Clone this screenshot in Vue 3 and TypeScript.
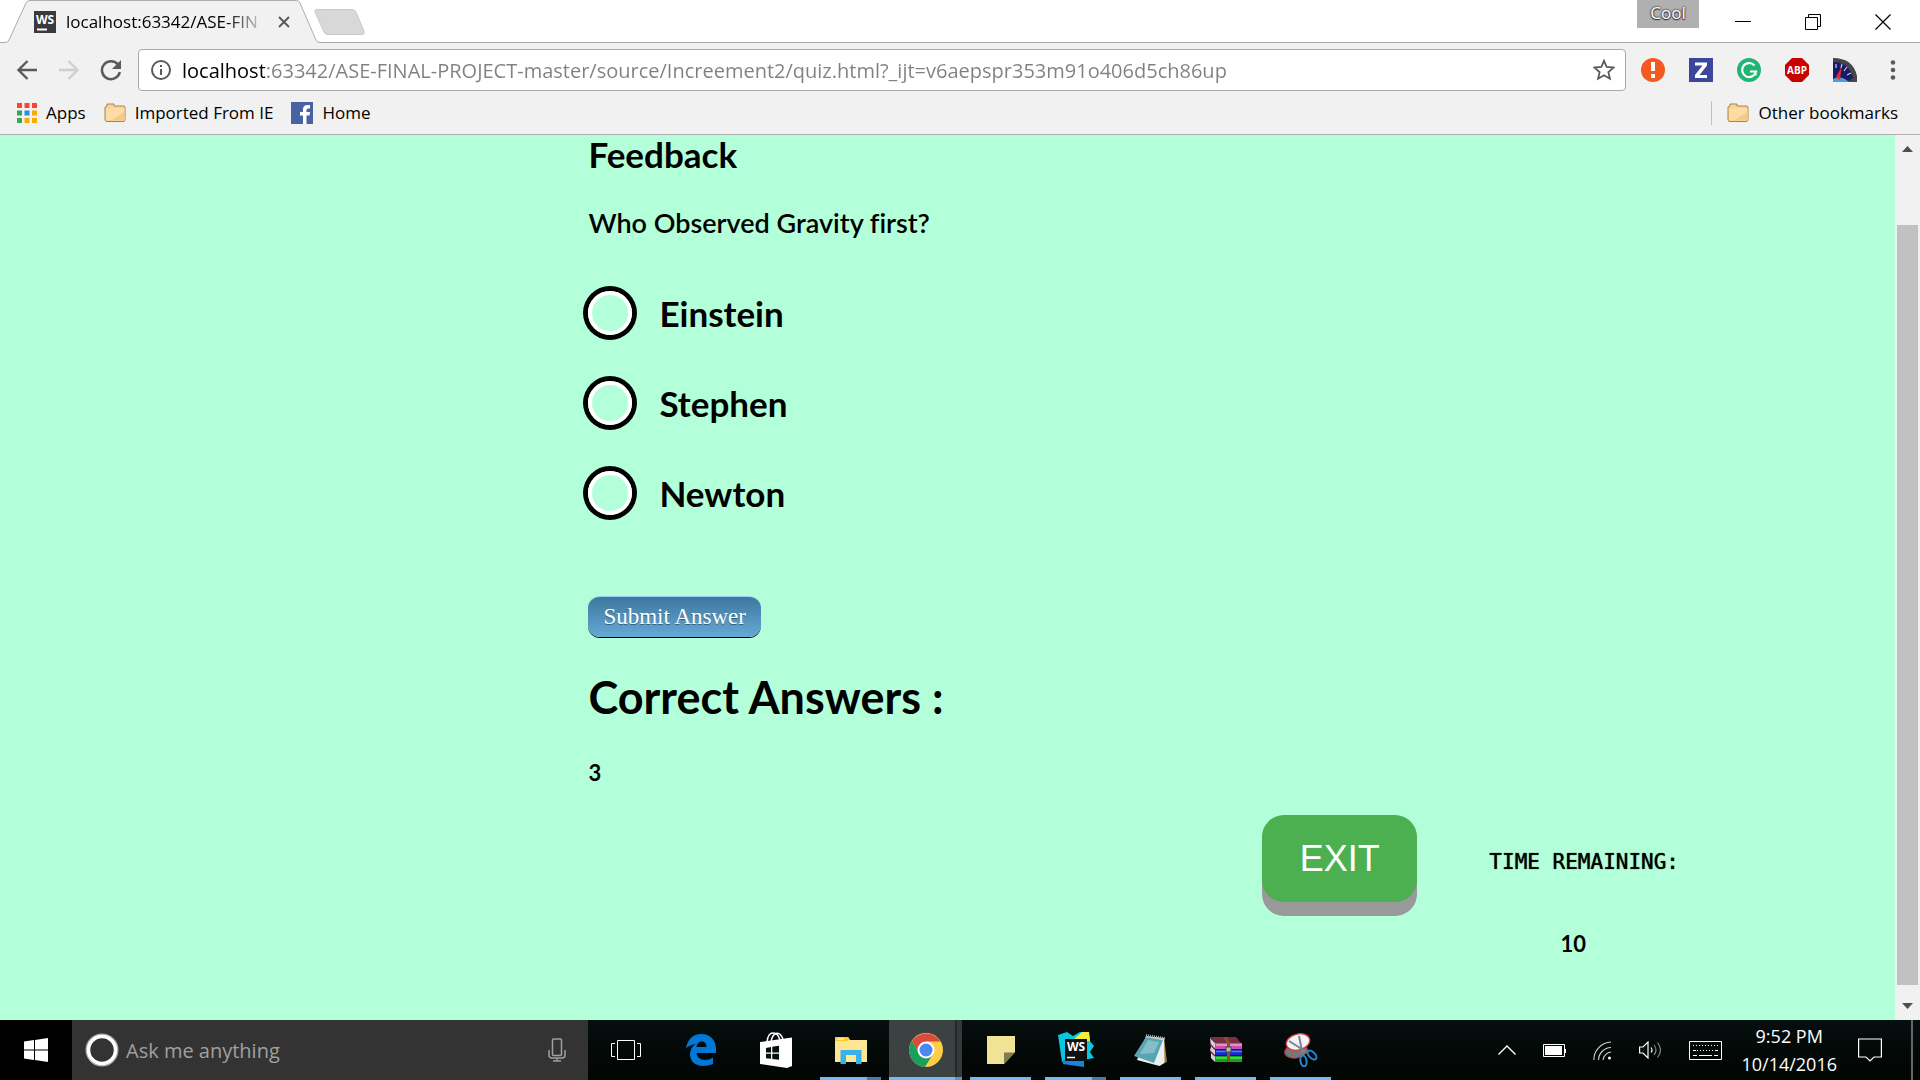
<script setup lang="ts">
import { ref } from 'vue'

const url = ref('localhost:63342/ASE-FINAL-PROJECT-master/source/Increement2/quiz.html?_ijt=v6aepspr353m91o406d5ch86up')
const options = ['Einstein', 'Stephen', 'Newton']
const picked = ref<string | null>(null)
const search = ref('')
const correct = ref(3)
const seconds = ref(10)
const appColors = ['#ff4131', '#ff4131', '#ff4131', '#34a853', '#2a8cf0', '#f9ab00', '#34a853', '#f9ab00', '#f9ab00']
</script>

<template>
  <div class="screen">
    <header class="chrome">
      <div class="tabstrip">
        <svg class="tab-shape" width="320" height="43" viewBox="0 0 320 43" aria-hidden="true">
          <path d="M0 42.5H5Q8 42.5 9 40L26 3Q27 .5 30 .5H296Q299 .5 300 3L316 40Q317 42.5 320 42.5V43H0Z" fill="#f1f1f1" />
          <path d="M0 42.5H5Q8 42.5 9 40L26 3Q27 .5 30 .5H296Q299 .5 300 3L316 40Q317 42.5 320 42.5" fill="none" stroke="#acacac" />
        </svg>
        <div class="tab">
          <svg width="22" height="22" viewBox="0 0 22 22" aria-hidden="true">
            <rect width="22" height="22" fill="#3a3a3c" />
            <text x="11" y="13" text-anchor="middle" font-family="Open Sans, sans-serif" font-weight="700" font-size="12" fill="#fff">WS</text>
            <path d="M3 18.5h10" stroke="#fff" stroke-width="2" />
          </svg>
          <span class="tab-title">localhost:63342/ASE-FIN</span>
          <button class="plain" aria-label="Close tab">
            <svg width="12" height="12" viewBox="0 0 12 12"><path d="M1 1l10 10M11 1L1 11" stroke="#5a5a5a" stroke-width="2" /></svg>
          </button>
        </div>
        <button class="plain newtab" aria-label="New tab">
          <svg width="52" height="26" viewBox="0 0 52 26"><path d="M3 .5H38Q41 .5 42 3L50 22Q51 25.500 48 25.500H14Q11 25.500 10 23L1 3Q0 .5 3 .5Z" fill="#d8d8d8" stroke="#c9c9c9" /></svg>
        </button>
        <div class="window-controls">
          <span class="profile">Cool</span>
          <button class="plain" aria-label="Minimize"><svg width="16" height="16" viewBox="0 0 16 16"><path d="M0 7.500h16" stroke="#000" /></svg></button>
          <button class="plain" aria-label="Restore"><svg width="16" height="16" viewBox="0 0 16 16" fill="none" stroke="#000"><path d="M.5 3.500h12v12H.5zM3.500 3.500v-3h12v12h-3" /></svg></button>
          <button class="plain" aria-label="Close"><svg width="16" height="16" viewBox="0 0 16 16"><path d="M.5 .5l15 15M15.500 .5l-15 15" stroke="#000" stroke-width="1.200" /></svg></button>
        </div>
      </div>

      <nav class="toolbar">
        <button class="plain" aria-label="Back"><svg width="22" height="22" viewBox="0 0 22 22" fill="none" stroke="#5a5a5a" stroke-width="2.400"><path d="M21 11H3M11.500 2L2.500 11l9 9" /></svg></button>
        <button class="plain" aria-label="Forward"><svg width="22" height="22" viewBox="0 0 22 22" fill="none" stroke="#cfcfcf" stroke-width="2.400"><path d="M1 11h18M10.500 2l9 9-9 9" /></svg></button>
        <button class="plain" aria-label="Reload"><svg width="22" height="22" viewBox="0 0 22 22"><path d="M18.200 5.800A9 9 0 1 0 19.800 13" fill="none" stroke="#5a5a5a" stroke-width="2.500" /><path d="M21 1v9h-9z" fill="#5a5a5a" /></svg></button>
        <div class="omnibox">
          <svg width="22" height="22" viewBox="0 0 22 22" aria-hidden="true"><circle cx="11" cy="11" r="9" fill="none" stroke="#5a5a5a" stroke-width="2" /><path d="M11 10v6M11 6v2" stroke="#5a5a5a" stroke-width="2" /></svg>
          <input v-model="url" class="url" type="text" aria-label="Address" spellcheck="false" />
          <button class="plain" aria-label="Bookmark this page"><svg width="22" height="22" viewBox="0 0 22 22"><path d="M11 1.800l2.700 6.200 6.800.6-5.100 4.500 1.500 6.600L11 16.200l-5.900 3.500 1.500-6.600L1.500 8.600l6.800-.6z" fill="none" stroke="#5a5a5a" stroke-width="1.800" /></svg></button>
        </div>
        <div class="extensions">
          <svg width="24" height="24" viewBox="0 0 24 24"><circle cx="12" cy="12" r="12" fill="#f4591f" /><path d="M10 4h4v9h-4zM10 16h4v4h-4z" fill="#fff" /></svg>
          <svg width="24" height="24" viewBox="0 0 24 24"><rect width="24" height="24" fill="#3a479c" /><path d="M6 4.500h12v3L10.500 17H18v3H6v-3l7.500-9.500H6z" fill="#fff" /></svg>
          <svg width="24" height="24" viewBox="0 0 24 24"><circle cx="12" cy="12" r="12" fill="#20b573" /><path d="M17.500 7.500A7 7 0 1 0 19 13.500H13M18.500 13v4.500" fill="none" stroke="#fff" stroke-width="2.200" /></svg>
          <svg width="24" height="24" viewBox="0 0 24 24"><path d="M7 0h10l7 7v10l-7 7H7l-7-7V7z" fill="#c70000" /><text x="12" y="16" text-anchor="middle" font-family="Open Sans, sans-serif" font-weight="700" font-size="10" fill="#fff">ABP</text></svg>
          <svg width="24" height="24" viewBox="0 0 24 24"><path d="M0 0Q20 0 24 18v6H0z" fill="#44464a" /><path d="M0 4Q16 4 20 20L14 24H0z" fill="#181c68" /><path d="M0 21Q8 17 16 24H0z" fill="#4b9de0" /><path d="M3 6v4M9 6L8 10M14 9l-3 4M18 15l-4 2" stroke="#c8cbe4" stroke-width="1.200" /><path d="M8.500 9L7 22l-4-3z" fill="#f02a2a" /></svg>
          <button class="plain" aria-label="Menu"><svg width="24" height="24" viewBox="0 0 24 24" fill="#5a5a5a"><circle cx="12" cy="4.500" r="2.300" /><circle cx="12" cy="12" r="2.300" /><circle cx="12" cy="19.500" r="2.300" /></svg></button>
        </div>
      </nav>

      <nav class="bookmarks">
        <a href="#apps">
          <svg width="20" height="20" viewBox="0 0 20 20"><rect v-for="(c, i) in appColors" :key="i" :x="(i % 3) * 7.500" :y="Math.floor(i / 3) * 7.500" width="5" height="5" :fill="c" /></svg>
          Apps
        </a>
        <a href="#imported">
          <svg class="folder" width="22" height="20" viewBox="0 0 22 20"><path d="M1 17V4L3 3V1H10V3H20L21 4V17L20 18.500H2Z" fill="#f9d391" stroke="#a98450" /><path d="M2 6Q12 4 20.500 5V17H2Z" fill="#fbdca4" /><path d="M20 9v8H8z" fill="#f1b667" opacity=".5" /></svg>
          Imported From IE
        </a>
        <a href="#home">
          <svg width="22" height="22" viewBox="0 0 22 22"><rect width="22" height="22" fill="#4862a3" /><path d="M12 22v-8.500H9V10h3V7.500Q12 3 16.500 3H19v3.500h-2Q15.500 6.500 15.500 8v2H19l-.5 3.500h-3V22z" fill="#fff" /></svg>
          Home
        </a>
        <a class="other" href="#other">
          <svg class="folder" width="22" height="20" viewBox="0 0 22 20"><path d="M1 17V4L3 3V1H10V3H20L21 4V17L20 18.500H2Z" fill="#f9d391" stroke="#a98450" /><path d="M2 6Q12 4 20.500 5V17H2Z" fill="#fbdca4" /><path d="M20 9v8H8z" fill="#f1b667" opacity=".5" /></svg>
          Other bookmarks
        </a>
      </nav>
    </header>

    <div class="viewport">
      <main class="page">
        <form class="quiz" @submit.prevent>
          <h2>Feedback</h2>
          <h3>Who Observed Gravity first?</h3>
          <div class="options" role="radiogroup" aria-label="Who Observed Gravity first?">
            <label v-for="o in options" :key="o">
              <input v-model="picked" type="radio" name="answer" :value="o" />
              {{ o }}
            </label>
          </div>
          <button class="submit" type="submit">Submit Answer</button>
          <h1>Correct Answers :</h1>
          <p class="score">{{ correct }}</p>
        </form>
        <div class="footer-row">
          <button class="exit">EXIT</button>
          <div class="timer">
            <p class="timer-label">TIME REMAINING:</p>
            <p class="timer-value">{{ seconds }}</p>
          </div>
        </div>
      </main>
      <div class="scrollbar" aria-hidden="true">
        <svg width="11" height="6" viewBox="0 0 11 6"><path d="M0 6L5.500 0 11 6z" fill="#505050" /></svg>
        <div class="track"><div class="thumb"></div></div>
        <svg width="11" height="6" viewBox="0 0 11 6"><path d="M0 0L5.500 6 11 0z" fill="#505050" /></svg>
      </div>
    </div>

    <footer class="taskbar">
      <button class="plain start" aria-label="Start"><svg width="24" height="24" viewBox="0 0 24 24" fill="#fff"><path d="M0 3.500L10 2v9.500H0zM11 1.900L24 0v11.500H11zM0 12.500h10V22L0 20.500zM11 12.500h13V24l-13-1.900z" /></svg></button>
      <label class="search">
        <svg width="34" height="34" viewBox="0 0 34 34"><circle cx="17" cy="17" r="14.500" fill="none" stroke="#aaa" stroke-width="4" /><circle cx="17" cy="17" r="13.500" fill="none" stroke="#fff" stroke-width="3.500" /></svg>
        <input v-model="search" type="text" placeholder="Ask me anything" aria-label="Search" />
        <svg width="18" height="24" viewBox="0 0 18 24" fill="none" stroke="#a0a0a0" stroke-width="1.500"><rect x="4.500" y="1" width="9" height="16.500" rx="1" /><path d="M1 12v5q0 3 3 3h10q3 0 3-3v-5M9 20v3M5 23h8" /></svg>
      </label>
      <div class="tasks">
        <button class="plain task" aria-label="Task View"><svg width="30" height="20" viewBox="0 0 30 20" fill="none" stroke="#fff"><path d="M6.500 .5h17v19h-17zM4 3.500H.5v13H4M26 3.500h3.500v13H26" /></svg></button>
        <button class="plain task" aria-label="Edge"><svg width="30" height="32" viewBox="0 0 30 32"><path d="M0 14.500C1 6 7 0 15 0C24 0 30 6 30 14.500V19H10.500C11 23 14 26 19 26Q23.500 26 27 23.500V30Q22.500 32 17 32C9 32 4 27 4 20.500C4 16 6 12.500 9.500 10C4.500 11 1.800 12.500 0 14.500ZM10.500 13H20.500C20.500 9.500 18.500 7.500 15.500 7.500C12.500 7.500 11 10 10.500 13Z" fill="#0078d7" fill-rule="evenodd" /></svg></button>
        <button class="plain task" aria-label="Store"><svg width="32" height="36" viewBox="0 0 32 36"><path d="M7 10Q8 1 13 1T20 8M11 10Q12 3 16 1.500T23 7" fill="none" stroke="#fff" stroke-width="1.500" /><path d="M0 10L32 5.500V34L27 36 0 32z" fill="#fff" /><path d="M6 16l5-1v5.500H6zM12.300 14.800L19 13.800v6.700h-6.700zM6 21.800h5v5l-5-.6zM12.300 21.800H19v6l-6.700-.9z" fill="#06100d" /></svg></button>
        <button class="plain task open stacked" aria-label="File Explorer"><svg width="32" height="28" viewBox="0 0 32 28"><path d="M0 1h13l2 3h17v22H0z" fill="#ffe694" /><path d="M0 1h13l2 3-3 1H0z" fill="#fdc92f" /><path d="M2 3h7" stroke="#fff" /><path d="M5.500 28V14h21v14H21v-9H11v9z" fill="#38b3e7" /></svg></button>
        <button class="plain task open stacked active" aria-label="Chrome"><svg width="34" height="34" viewBox="0 0 34 34"><circle cx="17" cy="17" r="17" fill="#ffcd46" /><path d="M3 8A17 17 0 0 1 31.500 8.500H17L10 20z" fill="#da4b3e" /><path d="M2.800 7.800A17 17 0 0 0 16 34L24 21 10 20z" fill="#1b9f5c" /><circle cx="17" cy="17" r="8.500" fill="#fff" /><circle cx="17" cy="17" r="6.500" fill="#4a87f0" /></svg></button>
        <button class="plain task open" aria-label="Sticky Notes"><svg width="28" height="28" viewBox="0 0 28 28"><path d="M0 0h28v16L17 28H0z" fill="#f0e396" /><path d="M17 16.500h11L17 28z" fill="#807b4e" /></svg></button>
        <button class="plain task open stacked" aria-label="WebStorm"><svg width="36" height="36" viewBox="0 0 36 36"><path d="M0 3L9 0l6 4 7-4 9 1 1 8 4 5-4 6 4 6-10 2v6l-22-4z" fill="#08c7df" /><path d="M16 7L24 0h7l1 9-16 1z" fill="#f5ec3a" /><path d="M5 28l21 1v6L5 32z" fill="#1684e0" /><rect x="7" y="7" width="22" height="22" fill="#111" /><text x="18" y="18.500" text-anchor="middle" font-family="Open Sans, sans-serif" font-weight="700" font-size="12" fill="#fff">WS</text><path d="M9 25.500h8" stroke="#fff" stroke-width="1.500" /></svg></button>
        <button class="plain task open" aria-label="Notepad"><svg width="34" height="32" viewBox="0 0 34 32"><path d="M30 3l3 25-4 1z" fill="#a97a3a" /><path d="M12 2l18 2 .5 25-5 3L3 26z" fill="#e9eff1" /><path d="M12 3l17 3-9 23-20-7z" fill="#5aa4b2" /><path d="M14 6l11 2-5 11-14 1z" fill="#9fd0d8" opacity=".6" /><path d="M12 1.500l19 3" stroke="#aaa" stroke-width="3" stroke-dasharray="1 1" /></svg></button>
        <button class="plain task open" aria-label="WinRAR"><svg width="32" height="26" viewBox="0 0 32 26"><path d="M0 0h26l5 6H5z" fill="#7a3040" /><path d="M5 6h27v6H5z" fill="#c552a8" /><path d="M6 8h26" stroke="#eaa6dc" stroke-width="1.500" /><path d="M5 12.500h27v6H5z" fill="#1a28c8" /><path d="M6 14.500h26" stroke="#5a78f5" stroke-width="1.500" /><path d="M5 19h27v6H5z" fill="#12a51c" /><path d="M6 21h26" stroke="#5ee05a" stroke-width="1.500" /><path d="M0 1l5 5v19l-4-4V15l-1-2 1-3z" fill="#d9d1da" /><path d="M0 7l5 5.500M0 14l5 5" stroke="#7a254f" stroke-width="1.500" /><path d="M13 0l4 6v19h3V6l-3-6z" fill="#875422" /><rect x="16" y="10" width="5" height="5" fill="#bbb" stroke="#444" /></svg></button>
        <button class="plain task open" aria-label="Snipping Tool"><svg width="34" height="34" viewBox="0 0 34 34"><ellipse cx="12" cy="18" rx="11.500" ry="7" fill="#777" stroke="#a33" transform="rotate(-10 12 18)" /><ellipse cx="14" cy="9" rx="12" ry="8" fill="#f3f3f8" stroke="#d33a3a" stroke-width="1.300" transform="rotate(-15 14 9)" /><path d="M5 8l19 12M15 3l4 20" stroke="#788490" stroke-width="2" /><ellipse cx="19.500" cy="28" rx="3" ry="5.500" fill="none" stroke="#2d86c8" stroke-width="2" transform="rotate(-10 19.500 28)" /><ellipse cx="28" cy="22" rx="3" ry="5.500" fill="none" stroke="#2d86c8" stroke-width="2" transform="rotate(-45 28 22)" /></svg></button>
      </div>
      <div class="tray">
        <svg width="18" height="10" viewBox="0 0 18 10"><path d="M.5 9.500L9 1l8.500 8.500" fill="none" stroke="#fff" stroke-width="1.400" /></svg>
        <svg width="23" height="13" viewBox="0 0 23 13"><path d="M.5 .5h21v12H.5zM22.500 5v4" fill="none" stroke="#fff" /><path d="M2 2h17v9H2z" fill="#fff" /></svg>
        <svg width="19" height="19" viewBox="0 0 19 19" fill="none" stroke="#ccc" stroke-width="1.200"><path d="M.8 19A18 18 0 0 1 18 1M5.500 19A13 13 0 0 1 18 6.500M10 19a9 9 0 0 1 8-8" /><circle cx="16.500" cy="17" r="1.500" fill="#fff" stroke="none" /></svg>
        <svg width="23" height="18" viewBox="0 0 23 18" fill="none" stroke="#fff" stroke-width="1.200"><path d="M.6 6H4L9 1v16L4 12H.6zM12 6.500Q14 9 12 11.500" /><path d="M15 4q4 5 0 10M18.500 1.500q6 7.500 0 15" stroke="#888" /></svg>
        <svg width="33" height="19" viewBox="0 0 33 19" fill="none" stroke="#fff"><path d="M.5 .5h32v18H.5z" /><path d="M4 4.500h25M8 9.500h17" stroke-dasharray="1 2" /><path d="M4 9.500h3M26 9.500h3M4 14.500h4M10 14.500h13M25 14.500h4" /></svg>
        <time class="clock"><span>9:52 PM</span><span>10/14/2016</span></time>
        <svg width="24" height="24" viewBox="0 0 24 24"><path d="M.6 1h22.800v18H16l-4 4-4-4H.6z" fill="none" stroke="#fff" stroke-width="1.200" /></svg>
      </div>
    </footer>
  </div>
</template>

<style>
body { margin: 0; }
</style>

<style scoped>
* { box-sizing: border-box; }
.screen {
  display: flex;
  flex-direction: column;
  min-height: 100vh;
  font-family: "Open Sans", "Noto Sans", sans-serif;
  color: #000;
}
svg { display: block; flex: none; }
.plain { padding: 0; border: 0; background: none; font: inherit; color: inherit; }

.chrome { background: #f1f1f1; border-bottom: 1px solid #b0b0b0; }
.tabstrip {
  position: relative;
  display: flex;
  align-items: center;
  height: 43px;
  background: linear-gradient(#acacac, #acacac) bottom / 100% 1px no-repeat #fff;
}
.tab-shape { position: absolute; left: 0; top: 0; }
.tab { position: relative; display: flex; align-items: center; width: 314px; padding: 0 24px 0 34px; }
.tab-title {
  flex: 1;
  margin: 0 12px 0 10px;
  white-space: nowrap;
  font-size: 17px;
  line-height: 24px;
  -webkit-mask-image: linear-gradient(90deg, #000 80%, transparent);
  mask-image: linear-gradient(90deg, #000 80%, transparent);
}
.newtab { position: relative; }
.window-controls { display: flex; align-items: center; gap: 54px; margin-left: auto; padding-right: 29px; height: 100%; }
.profile {
  align-self: flex-start;
  width: 62px;
  height: 28px;
  margin-right: -18px;
  background: #b0b0b0;
  color: #fff;
  font-size: 17px;
  line-height: 26px;
  text-align: center;
  text-shadow: 0 0 2px #333, 0 0 2px #333, 0 1px 1px #333;
}

.toolbar { display: flex; align-items: center; gap: 20px; padding: 6px 15px 0 16px; }
.omnibox {
  flex: 1;
  display: flex;
  align-items: center;
  height: 42px;
  margin-left: -4px;
  padding: 0 10px 0 11px;
  border: 1px solid #a9a9a9;
  border-radius: 4px;
  background: #fff;
}
.url {
  flex: 1;
  min-width: 0;
  margin: 0 10px;
  padding: 2px 0 0;
  border: 0;
  outline: 0;
  font: 20px/28px "Open Sans", "Noto Sans", sans-serif;
  color: transparent;
  background: linear-gradient(90deg, #000 83px, #808080 83px);
  -webkit-background-clip: text;
  background-clip: text;
}
.extensions { display: flex; gap: 24px; margin-left: -5px; }

.bookmarks { display: flex; align-items: center; height: 43px; padding: 0 22px 0 17px; gap: 18px; }
.bookmarks a { display: flex; align-items: center; gap: 9px; color: #000; text-decoration: none; font-size: 17px; line-height: 24px; }
.bookmarks .other { margin-left: auto; padding-left: 15px; border-left: 1px solid #c0c0c0; }

.viewport { flex: 1; display: flex; background: #b3ffd9; }
.page { flex: 1; font-family: Lato, sans-serif; font-variant-ligatures: none; }
.quiz { padding-left: calc(31% + 1px); }
h1, h2, h3, p { margin: 0; }
h2 { font-size: 35px; line-height: 38px; font-weight: 700; }
h3 { margin-top: 33px; font-size: 27px; line-height: 34px; font-weight: 600; }
.options { margin-top: 28px; }
.options label { display: flex; align-items: center; gap: 27px; height: 90px; font-size: 35px; font-weight: 700; }
.options input {
  appearance: none;
  width: 44px;
  height: 44px;
  margin: 0;
  border: 4px solid #fff;
  border-radius: 50%;
  box-shadow: 0 0 0 5px #000;
}
.options input:checked { background: #000; }
.submit {
  display: block;
  height: 41px;
  margin-top: 58px;
  padding: 0 15px;
  border: 0;
  border-top: 1px solid #96d1f8;
  border-radius: 12px;
  background: linear-gradient(#3e779d, #65a9d7);
  box-shadow: 0 1px 0 #000;
  color: #fff;
  font: 23px/36px "Liberation Serif", serif;
  text-shadow: 0 1px 0 rgba(0, 0, 0, .4);
}
h1 { margin-top: 31px; font-size: 45px; line-height: 58px; font-weight: 700; }
.score { margin-top: 33px; font-size: 22px; line-height: 28px; font-weight: 700; }
.footer-row { display: flex; justify-content: flex-end; gap: 72px; margin-top: 28px; padding-right: 216px; }
.exit {
  width: 155px;
  height: 87px;
  border: 0;
  border-radius: 22px;
  background: #4caf50;
  box-shadow: 0 14px 0 #999;
  color: #fff;
  font: 36px/42px "Liberation Sans", sans-serif;
}
.timer { padding-top: 35px; text-align: center; }
.timer-label { font: 21px/24px "DejaVu Sans Mono", monospace; text-shadow: 0 0 1px #000; }
.timer-value { margin-top: 56px; padding-right: 22px; font-size: 22px; line-height: 28px; font-weight: 700; }

.scrollbar { display: flex; flex-direction: column; align-items: center; width: 25px; padding: 11px 0; background: #f1f1f1; }
.track { flex: 1; align-self: stretch; padding: 73px 2px 18px; }
.thumb { height: 100%; background: #c1c1c1; }

.taskbar {
  display: flex;
  height: 60px;
  background: linear-gradient(#060f0f, #020806 60%, #020705);
  color: #fff;
}
.start { width: 72px; padding-left: 24px; background: #000; }
.search { display: flex; align-items: center; width: 516px; padding: 0 22px 0 13px; background: #333; }
.search input {
  flex: 1;
  min-width: 0;
  margin-left: 7px;
  padding: 2px 0 0;
  border: 0;
  outline: 0;
  background: none;
  color: #fff;
  font: 20px/28px "Open Sans", "Noto Sans", sans-serif;
}
.search input::placeholder { color: #a0a0a0; opacity: 1; }
.tasks { display: flex; }
.task { display: flex; align-items: center; justify-content: center; width: 61px; margin: 0 7px; }
.task.open { background: linear-gradient(#76b9ed, #76b9ed) bottom / 100% 3px no-repeat; }
.task.stacked { background: linear-gradient(90deg, #76b9ed 47px, #4c7ca4 47px) bottom / 100% 3px no-repeat; }
.task.active {
  width: 73px;
  margin: 0 1px;
  background:
    linear-gradient(90deg, #76b9ed 66px, #5c93c0 66px) bottom / 100% 3px no-repeat,
    linear-gradient(90deg, #3c4242 66px, #242a2a 66px, #242a2a 68px, #343a3a 68px);
}
.tray { display: flex; align-items: center; gap: 27px; margin-left: auto; margin-right: 7px; padding-right: 29px; border-right: 2px solid #666; }
.clock { display: flex; flex-direction: column; margin: 0 -6px 0 -8px; text-align: center; font-size: 18px; line-height: 28px; }
</style>
